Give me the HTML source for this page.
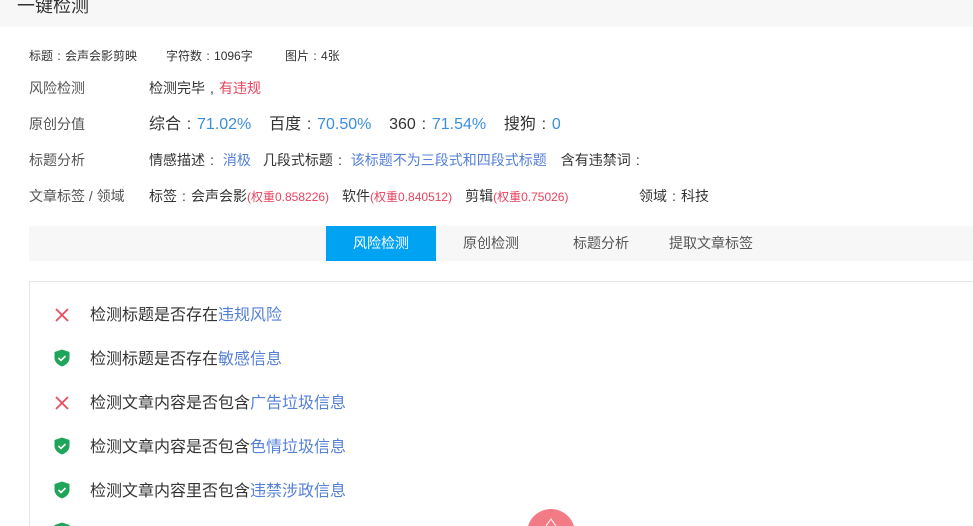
<!DOCTYPE html>
<html><head><meta charset="utf-8"><style>
*{margin:0;padding:0;box-sizing:border-box}
html,body{width:973px;height:526px;overflow:hidden}
body{background:#fff;font-family:"Liberation Sans","Noto Sans CJK SC",sans-serif;color:#333}
#w{position:relative;width:973px;height:526px;overflow:hidden}
.a{position:absolute;white-space:nowrap}
.c{display:inline-block;width:1em;text-align:center}
.hdr{position:absolute;left:0;top:0;width:973px;height:27px;background:#f7f7f7}
.b{color:#3c8ee0}.r{color:#e8435e}.lb{color:#5580d8}
.lab{color:#555}
.tabs{position:absolute;left:29px;top:226px;width:944px;height:35px;background:#f7f7f7}
.tab{position:absolute;top:0;height:35px;line-height:35px;font-size:14px;color:#555}
.act{left:297px;width:110px;background:#00a2f2;color:#fff;text-align:center}
.panel{position:absolute;left:29px;top:281px;width:944px;height:245px;border:1px solid #e6e6e6;border-bottom:none;border-right:none}
.it{position:absolute;left:90px;font-size:16px;color:#333}
.ic{position:absolute;left:54px}
</style></head><body><div id="w">
<div class="hdr"></div>
<div class="a" style="left:17px;top:-8px;font-size:18px;color:#333">一键检测</div>

<div class="a" style="left:29px;top:47px;font-size:12px">标题<span class="c">:</span>会声会影剪映</div>
<div class="a" style="left:166px;top:47px;font-size:12px">字符数<span class="c">:</span>1096字</div>
<div class="a" style="left:285px;top:47px;font-size:12px">图片<span class="c">:</span>4张</div>

<div class="a lab" style="left:29px;top:78px;font-size:14px">风险检测</div>
<div class="a" style="left:149px;top:78px;font-size:14px">检测完毕<span class="c">,</span><span class="r">有违规</span></div>

<div class="a lab" style="left:29px;top:114px;font-size:14px">原创分值</div>
<div class="a" style="left:149px;top:110px;font-size:16px">综合<span class="c">:</span><span class="b">71.02%</span>&nbsp;&nbsp;&nbsp;&nbsp;百度<span class="c">:</span><span class="b">70.50%</span>&nbsp;&nbsp;&nbsp;&nbsp;360<span class="c">:</span><span class="b">71.54%</span>&nbsp;&nbsp;&nbsp;&nbsp;搜狗<span class="c">:</span><span class="b">0</span></div>

<div class="a lab" style="left:29px;top:150px;font-size:14px">标题分析</div>
<div class="a" style="left:149px;top:150px;font-size:14px">情感描述<span class="c">:</span> <span class="lb">消极</span><span style="margin-left:12px">几段式标题</span><span class="c">:</span> <span class="lb">该标题不为三段式和四段式标题</span><span style="margin-left:14px">含有违禁词</span><span class="c">:</span></div>

<div class="a lab" style="left:29px;top:186px;font-size:14px">文章标签 / 领域</div>
<div class="a" style="left:149px;top:186px;font-size:14px">标签<span class="c">:</span>会声会影<span class="r" style="font-size:12px">(权重0.858226)</span><span style="margin-left:13px">软件</span><span class="r" style="font-size:12px">(权重0.840512)</span><span style="margin-left:13px">剪辑</span><span class="r" style="font-size:12px">(权重0.75026)</span></div>
<div class="a" style="left:639px;top:186px;font-size:14px">领域<span class="c">:</span>科技</div>

<div class="tabs">
<div class="tab act">风险检测</div>
<div class="tab" style="left:434px">原创检测</div>
<div class="tab" style="left:544px">标题分析</div>
<div class="tab" style="left:640px">提取文章标签</div>
</div>

<div class="panel"></div>

<svg class="ic" style="top:307px" width="16" height="16" viewBox="0 0 16 16"><path d="M2 2L14 14M14 2L2 14" stroke="#ea4a5e" stroke-width="1.8"/></svg>
<div class="a it" style="top:301px">检测标题是否存在<span class="lb">违规风险</span></div>

<svg class="ic" style="top:349px" width="16" height="18" viewBox="0 0 16 18"><path d="M8 0.5L15.5 3V9C15.5 13 12 16 8 17.5C4 16 0.5 13 0.5 9V3Z" fill="#1fa55a"/><path d="M4.5 9L7 11.5L11.5 7" stroke="#fff" stroke-width="1.6" fill="none"/></svg>
<div class="a it" style="top:345px">检测标题是否存在<span class="lb">敏感信息</span></div>

<svg class="ic" style="top:395px" width="16" height="16" viewBox="0 0 16 16"><path d="M2 2L14 14M14 2L2 14" stroke="#ea4a5e" stroke-width="1.8"/></svg>
<div class="a it" style="top:389px">检测文章内容是否包含<span class="lb">广告垃圾信息</span></div>

<svg class="ic" style="top:437px" width="16" height="18" viewBox="0 0 16 18"><path d="M8 0.5L15.5 3V9C15.5 13 12 16 8 17.5C4 16 0.5 13 0.5 9V3Z" fill="#1fa55a"/><path d="M4.5 9L7 11.5L11.5 7" stroke="#fff" stroke-width="1.6" fill="none"/></svg>
<div class="a it" style="top:433px">检测文章内容是否包含<span class="lb">色情垃圾信息</span></div>

<svg class="ic" style="top:481px" width="16" height="18" viewBox="0 0 16 18"><path d="M8 0.5L15.5 3V9C15.5 13 12 16 8 17.5C4 16 0.5 13 0.5 9V3Z" fill="#1fa55a"/><path d="M4.5 9L7 11.5L11.5 7" stroke="#fff" stroke-width="1.6" fill="none"/></svg>
<div class="a it" style="top:477px">检测文章内容里否包含<span class="lb">违禁涉政信息</span></div>

<svg class="ic" style="top:522px" width="16" height="4" viewBox="0 0 16 4"><path d="M8 0.5L15.5 3V4H0.5V3Z" fill="#1fa55a"/></svg>

<div style="position:absolute;left:527px;top:509px;width:48px;height:17px;overflow:hidden"><div style="width:48px;height:48px;border-radius:50%;background:#f27b86"></div></div>
<svg style="position:absolute;left:543px;top:517px" width="16" height="9" viewBox="0 0 16 9"><path d="M3 9L8 2L13 9" stroke="#fff" stroke-width="1" fill="none"/></svg>
</div></body></html>
